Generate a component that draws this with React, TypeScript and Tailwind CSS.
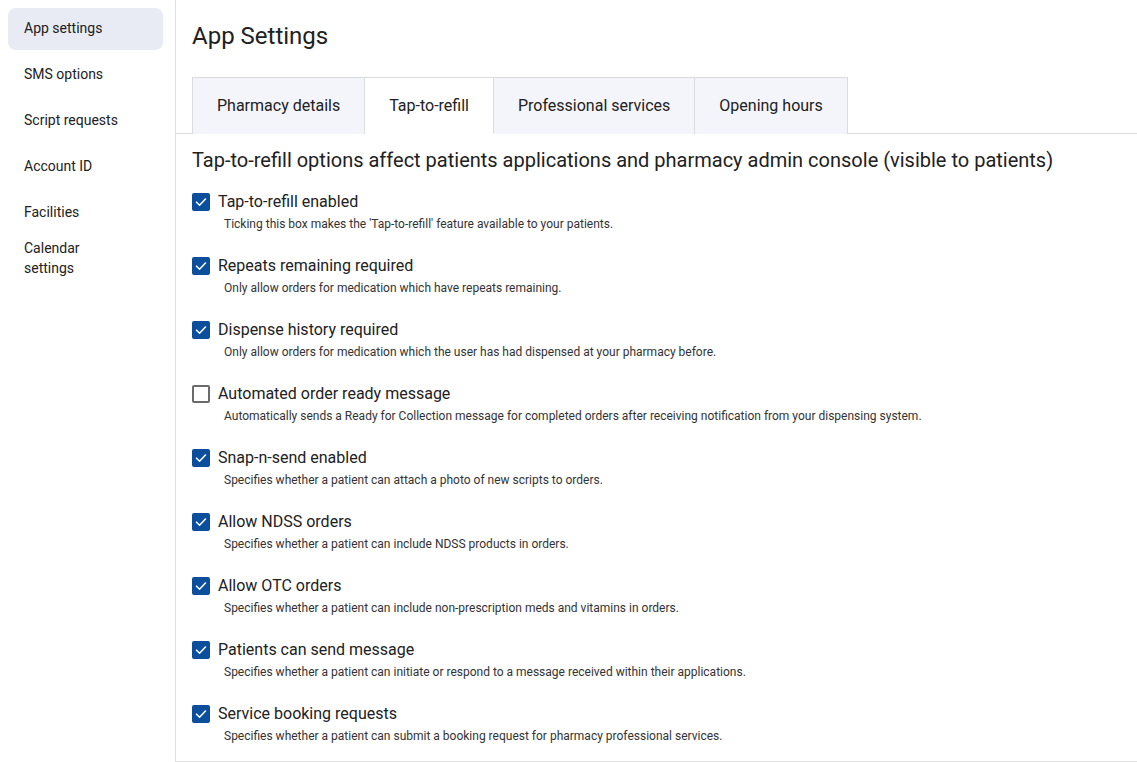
import React from "react";

const navItems = ["App settings", "SMS options", "Script requests", "Account ID", "Facilities"];
const tabs = ["Pharmacy details", "Tap-to-refill", "Professional services", "Opening hours"];
const options: { title: string; desc: string; checked: boolean }[] = [
  { title: "Tap-to-refill enabled", desc: "Ticking this box makes the 'Tap-to-refill' feature available to your patients.", checked: true },
  { title: "Repeats remaining required", desc: "Only allow orders for medication which have repeats remaining.", checked: true },
  { title: "Dispense history required", desc: "Only allow orders for medication which the user has had dispensed at your pharmacy before.", checked: true },
  { title: "Automated order ready message", desc: "Automatically sends a Ready for Collection message for completed orders after receiving notification from your dispensing system.", checked: false },
  { title: "Snap-n-send enabled", desc: "Specifies whether a patient can attach a photo of new scripts to orders.", checked: true },
  { title: "Allow NDSS orders", desc: "Specifies whether a patient can include NDSS products in orders.", checked: true },
  { title: "Allow OTC orders", desc: "Specifies whether a patient can include non-prescription meds and vitamins in orders.", checked: true },
  { title: "Patients can send message", desc: "Specifies whether a patient can initiate or respond to a message received within their applications.", checked: true },
  { title: "Service booking requests", desc: "Specifies whether a patient can submit a booking request for pharmacy professional services.", checked: true },
];

function Checkbox({ checked }: { checked: boolean }) {
  if (checked) {
    return (
      <div className="w-[18px] h-[18px] rounded-[2px] bg-[#0b4f9c] flex items-center justify-center shrink-0">
        <svg width="14" height="14" viewBox="0 0 24 24" fill="none">
          <path d="M4.5 12.5l5 5L19.5 7" stroke="white" strokeWidth="2.6" strokeLinecap="square" />
        </svg>
      </div>
    );
  }
  return <div className="w-[18px] h-[18px] rounded-[2px] border-2 border-[#6b6b6b] bg-white shrink-0" />;
}

export default function App() {
  return (
    <div className="flex w-[1137px] h-[762px] bg-white text-[#212121]" style={{ fontFamily: "Roboto, 'Liberation Sans', sans-serif" }}>
      <aside className="w-[176px] shrink-0 border-r border-[#e0e0e0] pt-2 pl-2 pr-3">
        {navItems.map((n, i) => (
          <div
            key={n}
            className={`h-[42px] mb-1 flex items-center pl-4 pb-[2px] rounded-lg text-[14px] ${i === 0 ? "bg-[#e8ebf3]" : ""}`}
          >
            {n}
          </div>
        ))}
        <div className="pl-4 text-[14px] leading-[20px]">
          Calendar
          <br />
          settings
        </div>
      </aside>
      <main className="flex-1 flex flex-col border-b border-[#e0e0e0] h-[762px]">
        <h1 className="text-[24px] leading-[30px] pl-4 pt-[21px] pb-[26px]">App Settings</h1>
        <div className="flex pl-4 border-b border-[#dcdcdc] h-[57px]">
          {tabs.map((t, i) => (
            <div
              key={t}
              className={`px-6 h-[57px] flex items-center text-[16px] border-t border-[#dcdcdc] ${
                i === 0 ? "border-l" : ""
              } border-r ${i === 1 ? "bg-white border-b border-b-white" : "bg-[#f4f5fb]"}`}
            >
              {t}
            </div>
          ))}
        </div>
        <h2 className="text-[20px] leading-[26px] pl-4 pt-[13px] pb-[18px]">
          Tap-to-refill options affect patients applications and pharmacy admin console (visible to patients)
        </h2>
        <div className="pl-4 flex flex-col">
          {options.map((o) => (
            <div key={o.title} className="h-[64px]">
              <div className="flex items-center gap-2 h-[22px]">
                <Checkbox checked={o.checked} />
                <span className="text-[16px] leading-[22px]">{o.title}</span>
              </div>
              <div className="pl-8 text-[12px] leading-[16px] mt-[3px] text-[#333]">{o.desc}</div>
            </div>
          ))}
        </div>
      </main>
    </div>
  );
}
